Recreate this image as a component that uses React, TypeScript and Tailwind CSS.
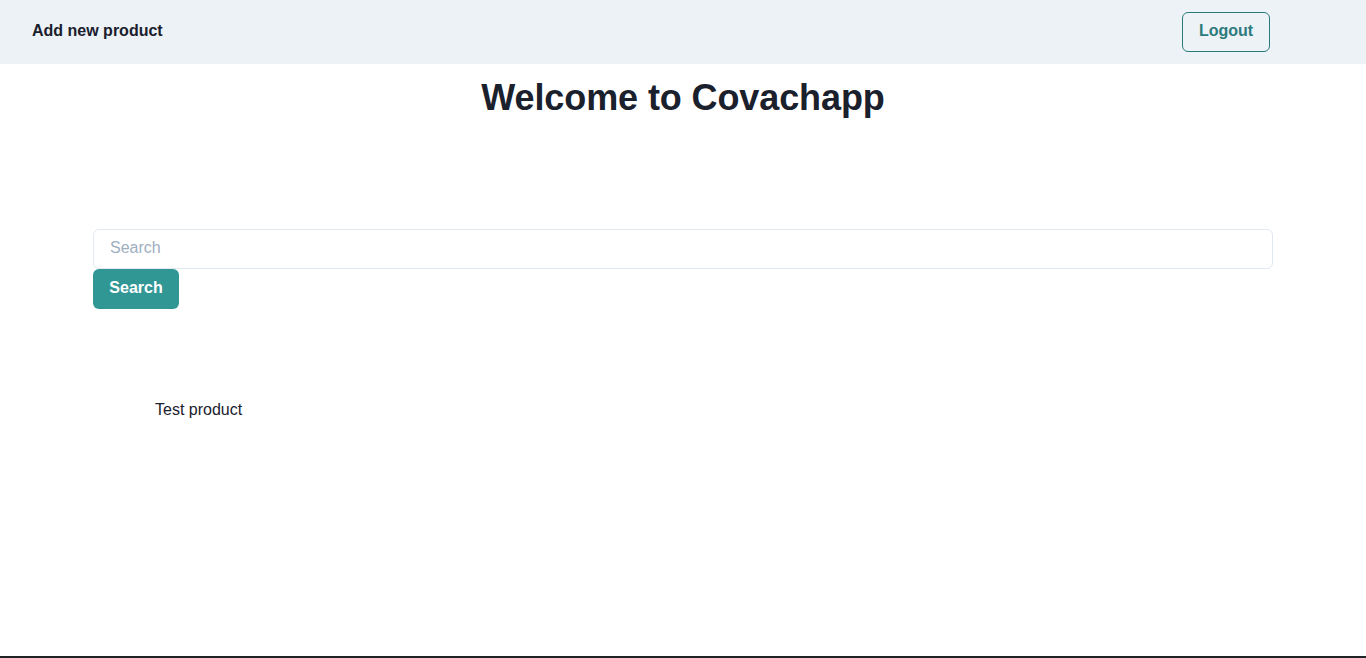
export default function App() {
  return (
    <div className="min-h-[658px] flex flex-col bg-white text-[#1a202c]" style={{ fontFamily: '"Liberation Sans", Arial, sans-serif' }}>
      <header className="h-16 bg-[#edf2f7] flex items-center justify-between pl-8 pr-24">
        <span className="font-bold text-base -mt-0.5">Add new product</span>
        <button className="h-10 w-[88px] pb-[2px] rounded-md border border-[#2c7a7b] text-[#2c7a7b] font-bold text-base">Logout</button>
      </header>
      <main className="flex-1 flex flex-col">
        <h1 className="text-center text-4xl font-bold leading-[1.2] mt-3 tracking-[-0.1px]">Welcome to Covachapp</h1>
        <div className="mt-[110px] px-[93px]">
          <input
            placeholder="Search"
            className="w-full h-10 rounded-md border border-[#e2e8f0] px-4 pb-[2px] text-base placeholder:text-[#a0aec0] outline-none"
          />
          <button className="h-10 w-[86px] pb-[2px] rounded-md bg-[#319795] text-white font-bold text-base">Search</button>
        </div>
        <div className="mt-[89px] pl-[155px] text-base">Test product</div>
      </main>
      <div className="h-[2px] bg-[#202427]" />
    </div>
  );
}
